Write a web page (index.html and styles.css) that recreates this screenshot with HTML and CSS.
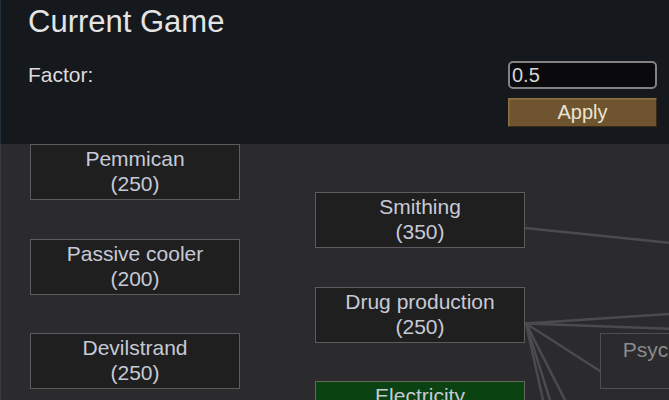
FILE: index.html
```html
<!DOCTYPE html>
<html lang="en">
<head>
<meta charset="utf-8">
<title>Current Game</title>
<link rel="stylesheet" href="styles.css">
</head>
<body>
<div class="window">
  <header class="header">
    <h1 class="title">Current Game</h1>
    <div class="factor-row">
      <label class="factor-label" for="factor">Factor:</label>
      <div class="controls">
        <input id="factor" class="factor-input" type="text" value="0.5">
        <button class="apply-btn" type="button">Apply</button>
      </div>
    </div>
  </header>
  <main class="tree">
    <svg class="links" width="669" height="256" viewBox="0 0 669 256">
      <g stroke="#4b4b4d" stroke-width="2.5" fill="none" stroke-linecap="round">
        <line x1="525" y1="84" x2="700" y2="102"/>
        <line x1="526" y1="179.5" x2="700" y2="168"/>
        <line x1="526" y1="179.5" x2="700" y2="186"/>
        <line x1="526" y1="179.5" x2="600" y2="227"/>
        <line x1="526" y1="179.5" x2="543" y2="256"/>
        <line x1="526" y1="179.5" x2="550" y2="256"/>
        <line x1="526" y1="179.5" x2="565" y2="256"/>
      </g>
    </svg>
    <div class="node" style="left:30px;top:0px"><span>Pemmican</span><span>(250)</span></div>
    <div class="node" style="left:30px;top:95px"><span>Passive cooler</span><span>(200)</span></div>
    <div class="node" style="left:30px;top:189px"><span>Devilstrand</span><span>(250)</span></div>
    <div class="node" style="left:315px;top:48px"><span>Smithing</span><span>(350)</span></div>
    <div class="node" style="left:315px;top:143px"><span>Drug production</span><span>(250)</span></div>
    <div class="node node-done" style="left:315px;top:237px"><span>Electricity</span><span>(1600)</span></div>
    <div class="node node-locked" style="left:600px;top:189px"><span>Psychoid brewing</span><span>(400)</span></div>
  </main>
</div>
</body>
</html>
```

FILE: styles.css
```css
* { box-sizing: border-box; }

html, body {
  margin: 0;
  padding: 0;
  background: #2b2b2d;
}

.window {
  width: 669px;
  height: 400px;
  overflow: hidden;
  display: flex;
  flex-direction: column;
  font-family: "Liberation Sans", Arial, sans-serif;
}

.header {
  height: 144px;
  flex: none;
  background: #15181d;
  border-left: 1px solid #24303b;
  padding: 6px 12px 0 27px;
  display: flex;
  flex-direction: column;
}

.title {
  margin: 0;
  font-size: 31px;
  line-height: 31px;
  font-weight: normal;
  color: #e4e4e4;
}

.factor-row {
  margin-top: 24px;
  display: flex;
  justify-content: space-between;
  align-items: flex-start;
}

.factor-label {
  margin-top: 3px;
  font-size: 21px;
  line-height: 21px;
  color: #dcdcdc;
}

.controls {
  width: 149px;
  display: flex;
  flex-direction: column;
  gap: 9px;
}

.factor-input {
  width: 149px;
  height: 28px;
  margin: 0;
  padding: 0 2px;
  border: 2px solid #828284;
  border-radius: 5px;
  background: #0a0a0c;
  color: #d6d6d6;
  font-family: "Liberation Sans", Arial, sans-serif;
  font-size: 20px;
  outline: none;
}

.apply-btn {
  width: 149px;
  height: 29px;
  margin: 0;
  padding: 0;
  border: 1px solid;
  border-color: #8e7042 #3a2a16 #3a2a16 #8e7042;
  background: #6e5530;
  box-shadow: inset 1px 1px 0 #7d6139;
  color: #ece4d2;
  font-family: "Liberation Sans", Arial, sans-serif;
  font-size: 20px;
  line-height: 27px;
}

.tree {
  position: relative;
  flex: 1;
  background: #2b2b2d;
  box-shadow: inset 1px 0 0 #3b3b3d;
}

.links {
  position: absolute;
  left: 0;
  top: 0;
}

.node {
  position: absolute;
  width: 210px;
  height: 56px;
  padding-top: 1px;
  border: 1px solid #5c5c5e;
  background: #1f1f20;
  color: #c6cad6;
  font-size: 21px;
  line-height: 25px;
  text-align: center;
  display: flex;
  flex-direction: column;
  align-items: center;
  white-space: nowrap;
}

.node-done {
  background: #0b4212;
  border-color: #5d6a5c;
}

.node-locked {
  background: #2b2b2d;
  border-color: #4e4e50;
  color: #8a8b8e;
  padding-top: 3px;
}
```
